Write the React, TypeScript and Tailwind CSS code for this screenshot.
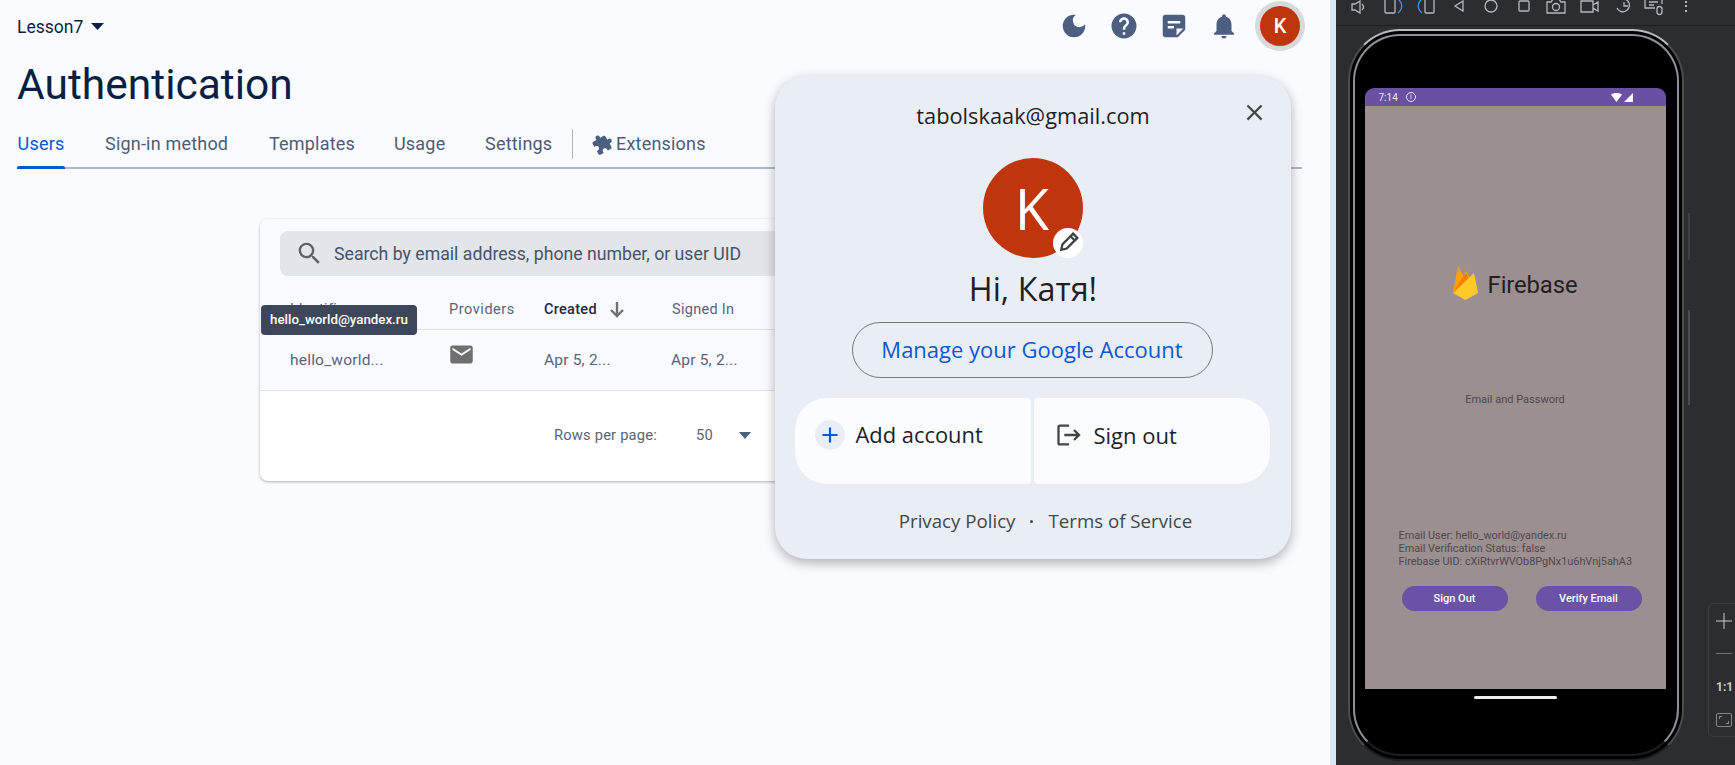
import { MdAdd, MdClose, MdDarkMode, MdEmail, MdExtension, MdHelp, MdLogout, MdNotifications, MdSearch, MdStickyNote2 } from "react-icons/md";

const tabs = [
  { label: "Sign-in method", className: "ml-[40px] w-[123px]" },
  { label: "Templates", className: "ml-[41px] w-[85px]" },
  { label: "Usage", className: "ml-[40px] w-[50px]" },
  { label: "Settings", className: "ml-[41px] w-[68px]" },
];

function ToolbarIcons() {
  return (
    <div className="flex h-[26px] items-start border-b border-[#1e1f22] pl-[13px] text-[#b4b8bf]">
      <svg width="350" height="16" viewBox="0 0 350 16" fill="none" stroke="currentColor" strokeWidth="1.3">
        <path d="M3 4h3l5-3v12l-5-3H3z" />
        <path d="M13 4c2 2 2 4 0 6" />
        <rect x="36" y="-3" width="10" height="16" rx="1" />
        <path d="M49-1c5 4 5 10 0 14" stroke="#4a8fe8" />
        <rect x="76" y="-3" width="9" height="16" rx="1" />
        <path d="M73-1c-5 4-5 10 0 14" stroke="#4a8fe8" />
        <path d="M114 1v10l-8-5z" />
        <circle cx="142" cy="6" r="6" />
        <rect x="170" y="1" width="10" height="10" rx="1" />
        <path d="M198 2h4l2-3h6l2 3h4v11h-18z" />
        <circle cx="207" cy="7" r="3.5" />
        <path d="M232 1h12v11h-12zM244 5l5-3v9l-5-3" />
        <path d="M272-1a6.500 6.500 0 1 1-4 9M275 2v4h4" />
        <path d="M296-2v10h10M313-2v6M300 2h9M300 5h5" />
        <path d="M308 9a2.500 2.500 0 0 1 5 0v3a2.500 2.500 0 0 1-5 0z" />
        <path d="M337 1v2M337 5v2M337 10v2" strokeWidth="2" />
      </svg>
    </div>
  );
}

function PhonePanel() {
  return (
    <div className="relative flex-1 bg-[#2b2d30]">
      <ToolbarIcons />
      <div className="ml-[12px] mt-[3px] h-[732px] w-[336px] rounded-[52px] border-[2px] border-[#4a4c50] border-t-[#b9bbbd] border-b-[#1c1d1f] bg-black p-[3px]">
        <div className="flex h-full flex-col items-center rounded-[47px] border-[2px] border-[#8f9194] border-b-[#1c1d1f] bg-black pr-[2px] pt-[52px]">
          <div className="flex h-[18px] w-[301px] items-center rounded-t-[9px] bg-[#6a50a5] pl-[14px] pr-[33px] font-['Roboto',sans-serif] text-[10px] text-[#e9e5f2]">
            <span>7:14</span>
            <span className="ml-[8px] flex h-[10px] w-[10px] items-center justify-center rounded-full border border-[#e9e5f2] text-[7px] leading-none">i</span>
            <svg className="ml-auto" width="22" height="9" viewBox="0 0 22 9" fill="#fff">
              <path d="M0 1.5C3-.5 8-.5 11 1.5L5.5 9z" />
              <path d="M13 9l9-9v9z" />
            </svg>
          </div>
          <div className="flex h-[583px] w-[301px] flex-col items-center bg-[#9b8f8f] font-['Roboto',sans-serif]">
            <div className="mt-[160px] flex h-[34px] items-center gap-[10px]">
              <svg width="25" height="34" viewBox="0 0 25 34">
                <path d="M0 27 5 0l7 13-5 8z" fill="#ffa000" />
                <path d="M8 16 13 5l6 10-8 8z" fill="#ffa000" />
                <path d="M0 27 8 14l5-7 3 7-7 8z" fill="#f57c00" />
                <path d="M0 27 21 7l4 20-12.500 7z" fill="#ffca28" />
              </svg>
              <span className="pt-[5px] text-[23.8px] leading-none tracking-[-0.1px] text-[#231f20]">Firebase</span>
            </div>
            <p className="mt-[94px] text-[11px] leading-none text-[#4e4850]">Email and Password</p>
            <div className="mt-[125px] w-full pl-[34px] text-[10.85px] leading-[12.8px] text-[#4e4850]">
              <p>Email User: hello_world@yandex.ru</p>
              <p>Email Verification Status: false</p>
              <p>Firebase UID: cXiRtvrWVOb8PgNx1u6hVnj5ahA3</p>
            </div>
            <div className="mt-[18px] flex w-full justify-between pl-[37px] pr-[24px]">
              <button className="h-[25px] w-[106px] rounded-full bg-[#6a52a5] text-[11px] font-medium text-white">Sign Out</button>
              <button className="h-[25px] w-[106px] rounded-full bg-[#6a52a5] text-[11px] font-medium text-white">Verify Email</button>
            </div>
          </div>
          <div className="mt-[7px] h-[3px] w-[83px] rounded-full bg-[#eeeeee]" />
        </div>
      </div>
      <div className="absolute left-[352px] top-[213px] h-[47px] w-[2px] bg-[#3d3f43]" />
      <div className="absolute left-[352px] top-[310px] h-[95px] w-[2px] bg-[#4a4c50]" />
      <div className="absolute left-[372px] top-[603px] flex h-[134px] w-[40px] flex-col items-start rounded-l-[6px] border border-[#3c3e42] pl-[7px] pt-[9px] text-[#c9ccd1]">
        <svg width="16" height="16" viewBox="0 0 16 16" stroke="currentColor"><path d="M8 0v16M0 8h16" /></svg>
        <div className="mt-[24px] h-px w-[16px] bg-[#70737a]" />
        <span className="mt-[27px] font-['Roboto',sans-serif] text-[12px] font-bold leading-none">1:1</span>
        <div className="mt-[20px] flex h-[14px] w-[16px] rounded-[2px] border border-[#85888e] p-[2px]">
          <div className="h-[3px] w-[3px] border-l border-t border-[#85888e]" />
          <div className="ml-auto mt-auto h-[3px] w-[3px] border-b border-r border-[#85888e]" />
        </div>
      </div>
    </div>
  );
}

function AccountPopup() {
  return (
    <div className="absolute left-[775px] top-[76px] flex h-[483px] w-[516px] flex-col items-center rounded-[32px] bg-[#e9eef6] font-['Open_Sans',sans-serif] shadow-[0_4px_12px_rgba(60,64,67,0.4)]">
      <MdClose className="absolute right-[23px] top-[23px] h-[27px] w-[27px] text-[#444746]" />
      <p className="mt-[25px] text-[21.8px] leading-[30px] text-[#1f1f1f]">tabolskaak@gmail.com</p>
      <div className="relative mt-[27px] flex h-[100px] w-[100px] items-center justify-center rounded-full bg-[#bf360c] pr-[2px] text-[56px] text-white">
        K
        <span className="absolute bottom-0 right-0 flex h-[30px] w-[30px] items-center justify-center rounded-full bg-white">
          <svg width="24" height="24" viewBox="0 0 20 20" fill="none" stroke="#3c4043" strokeWidth="1.9">
            <g transform="rotate(45 10 10)">
              <path d="M7.500 1.500h5v12.500L10 18l-2.500-4z" />
              <path d="M7.500 4.500h5" />
            </g>
          </svg>
        </span>
      </div>
      <p className="mt-[9px] text-[32.4px] leading-[42px] text-[#1f1f1f]">Hi, Катя!</p>
      <button className="-ml-[2px] mt-[13px] h-[56px] w-[361px] rounded-full border border-[#747775] pb-[2px] text-[22px] text-[#0b57d0]">Manage your Google Account</button>
      <div className="-ml-[2px] mt-[20px] flex gap-[3px]">
        <div className="flex h-[86px] w-[236px] items-start gap-[11px] rounded-l-[32px] rounded-r-[4px] bg-[#fbfcfe] pl-[20px] pt-[22px] text-[21.9px] leading-[30px] text-[#1f1f1f]">
          <span className="flex h-[30px] w-[30px] items-center justify-center rounded-full bg-[#e9eef6]">
            <MdAdd className="h-[26px] w-[26px] text-[#0b57d0]" />
          </span>
          Add account
        </div>
        <div className="flex h-[86px] w-[236px] items-start gap-[11px] rounded-l-[4px] rounded-r-[32px] bg-[#fbfcfe] pl-[21px] pt-[22px] text-[22px] leading-[30px] text-[#1f1f1f]">
          <MdLogout className="mt-[1px] h-[28px] w-[28px] text-[#444746]" />
          Sign out
        </div>
      </div>
      <div className="ml-[25px] mt-[23px] flex items-center text-[18.7px] leading-[28px] text-[#444746]">
        <span>Privacy Policy</span>
        <span className="mx-[15px] h-[3px] w-[3px] rounded-full bg-[#444746]" />
        <span>Terms of Service</span>
      </div>
    </div>
  );
}

function UsersCard() {
  return (
    <div className="ml-[260px] mt-[50px] h-[262px] w-[560px] overflow-hidden rounded-[8px] bg-white font-['Roboto',sans-serif] shadow-[0_1px_3px_rgba(60,64,67,0.4)]">
      <div className="h-[172px] border-b border-[#dfe2e8] bg-[#f8faff] pt-[12px]">
        <div className="ml-[20px] flex h-[45px] items-center rounded-l-[8px] bg-[#e2e5ea] pl-[15px] text-[17.7px] text-[#47536b]">
          <MdSearch className="h-[29px] w-[29px] text-[#5f6368]" />
          <span className="ml-[10px] pt-[1px]">Search by email address, phone number, or user UID</span>
        </div>
        <div className="mt-[12px] flex h-[42px] items-center border-b border-[#dfe2e8] pt-[3px] text-[14.5px] text-[#5a6478]">
          <span className="ml-[30px] w-[159px] tracking-[0.3px]">Identifier</span>
          <span className="w-[95px] tracking-[0.55px]">Providers</span>
          <span className="w-[66px] font-medium tracking-[0.3px] text-[#1f2a3d]">Created</span>
          <svg width="14" height="16" viewBox="0 0 14 16" fill="none" stroke="#6f6f6f" strokeWidth="2.4">
            <path d="M7 0v14M1 8l6 6 6-6" />
          </svg>
          <span className="ml-[48px] tracking-[0.3px]">Signed In</span>
        </div>
        <div className="flex h-[60px] items-center pt-[2px] text-[15.5px] tracking-[0.2px] text-[#5a6478]">
          <span className="ml-[30px] w-[158px]">hello_world...</span>
          <MdEmail className="mb-[14px] h-[27px] w-[27px] text-[#6f6f6f]" />
          <span className="ml-[69px] w-[127px]">Apr 5, 2...</span>
          <span>Apr 5, 2...</span>
        </div>
      </div>
      <div className="flex h-[90px] items-start pl-[294px] pt-[33px] text-[14.7px] leading-[22px] tracking-[0.2px] text-[#5a6478]">
        <span className="w-[142px]">Rows per page:</span>
        <span className="w-[43px]">50</span>
        <svg className="mt-[8px]" width="12" height="7" viewBox="0 0 12 7" fill="#4c5f80"><path d="M0 0h12L6 7z" /></svg>
      </div>
    </div>
  );
}

export default function App() {
  return (
    <div className="flex h-[765px] w-full overflow-hidden">
      <main className="relative w-[1330px] bg-[#fafbff] font-['Roboto',sans-serif]">
        <header className="flex h-[52px] items-center pl-[17px] text-[#0a1f44]">
          <span className="mt-[2px] text-[17.5px]">Lesson7</span>
          <svg className="ml-[8px] mt-[1px]" width="13" height="7" viewBox="0 0 13 7" fill="#0a1f44"><path d="M0 0h13L6.500 7z" /></svg>
          <div className="ml-auto flex items-center pr-[25px] text-[#4c5f80]">
            <MdDarkMode className="h-[30px] w-[30px]" />
            <MdHelp className="ml-[20px] h-[30px] w-[30px]" />
            <MdStickyNote2 className="ml-[20px] h-[30px] w-[30px]" />
            <MdNotifications className="ml-[20px] h-[30px] w-[30px]" />
            <div className="ml-[16px] flex h-[50px] w-[50px] items-center justify-center rounded-full bg-[#d8d9dc]">
              <span className="flex h-[40px] w-[40px] items-center justify-center rounded-full bg-[#bf360c] text-[20px] font-medium text-white">K</span>
            </div>
          </div>
        </header>
        <h1 className="pl-[17px] pt-[7px] text-[42.5px] leading-[52px] text-[#0a1f44]">Authentication</h1>
        <nav className="ml-[17px] mr-[28px] mt-[12px] flex h-[46px] items-center border-b-[2px] border-[#b0b6c8] pb-[3px] text-[18px] tracking-[0.2px] text-[#4f5b73]">
          <span className="relative flex h-full w-[48px] items-center justify-center text-[#0b57d0]">
            Users
            <span className="absolute -bottom-[5px] left-0 h-[3px] w-full rounded-t-[2px] bg-[#0b57d0]" />
          </span>
          {tabs.map((tab) => (
            <span key={tab.label} className={`${tab.className} whitespace-nowrap`}>{tab.label}</span>
          ))}
          <span className="ml-[19px] h-[30px] w-px bg-[#b0b6c8]" />
          <MdExtension className="ml-[19px] h-[21px] w-[21px] rotate-[-30deg] text-[#4c5f80]" />
          <span className="ml-[3px]">Extensions</span>
        </nav>
        <UsersCard />
        <div className="absolute left-[261px] top-[305px] flex h-[30px] w-[156px] items-center justify-center rounded-[4px] bg-[#3e4759] text-[13.3px] font-medium text-white">hello_world@yandex.ru</div>
        <AccountPopup />
      </main>
      <div className="w-[6px] bg-[#d9e8f1]" />
      <PhonePanel />
    </div>
  );
}
